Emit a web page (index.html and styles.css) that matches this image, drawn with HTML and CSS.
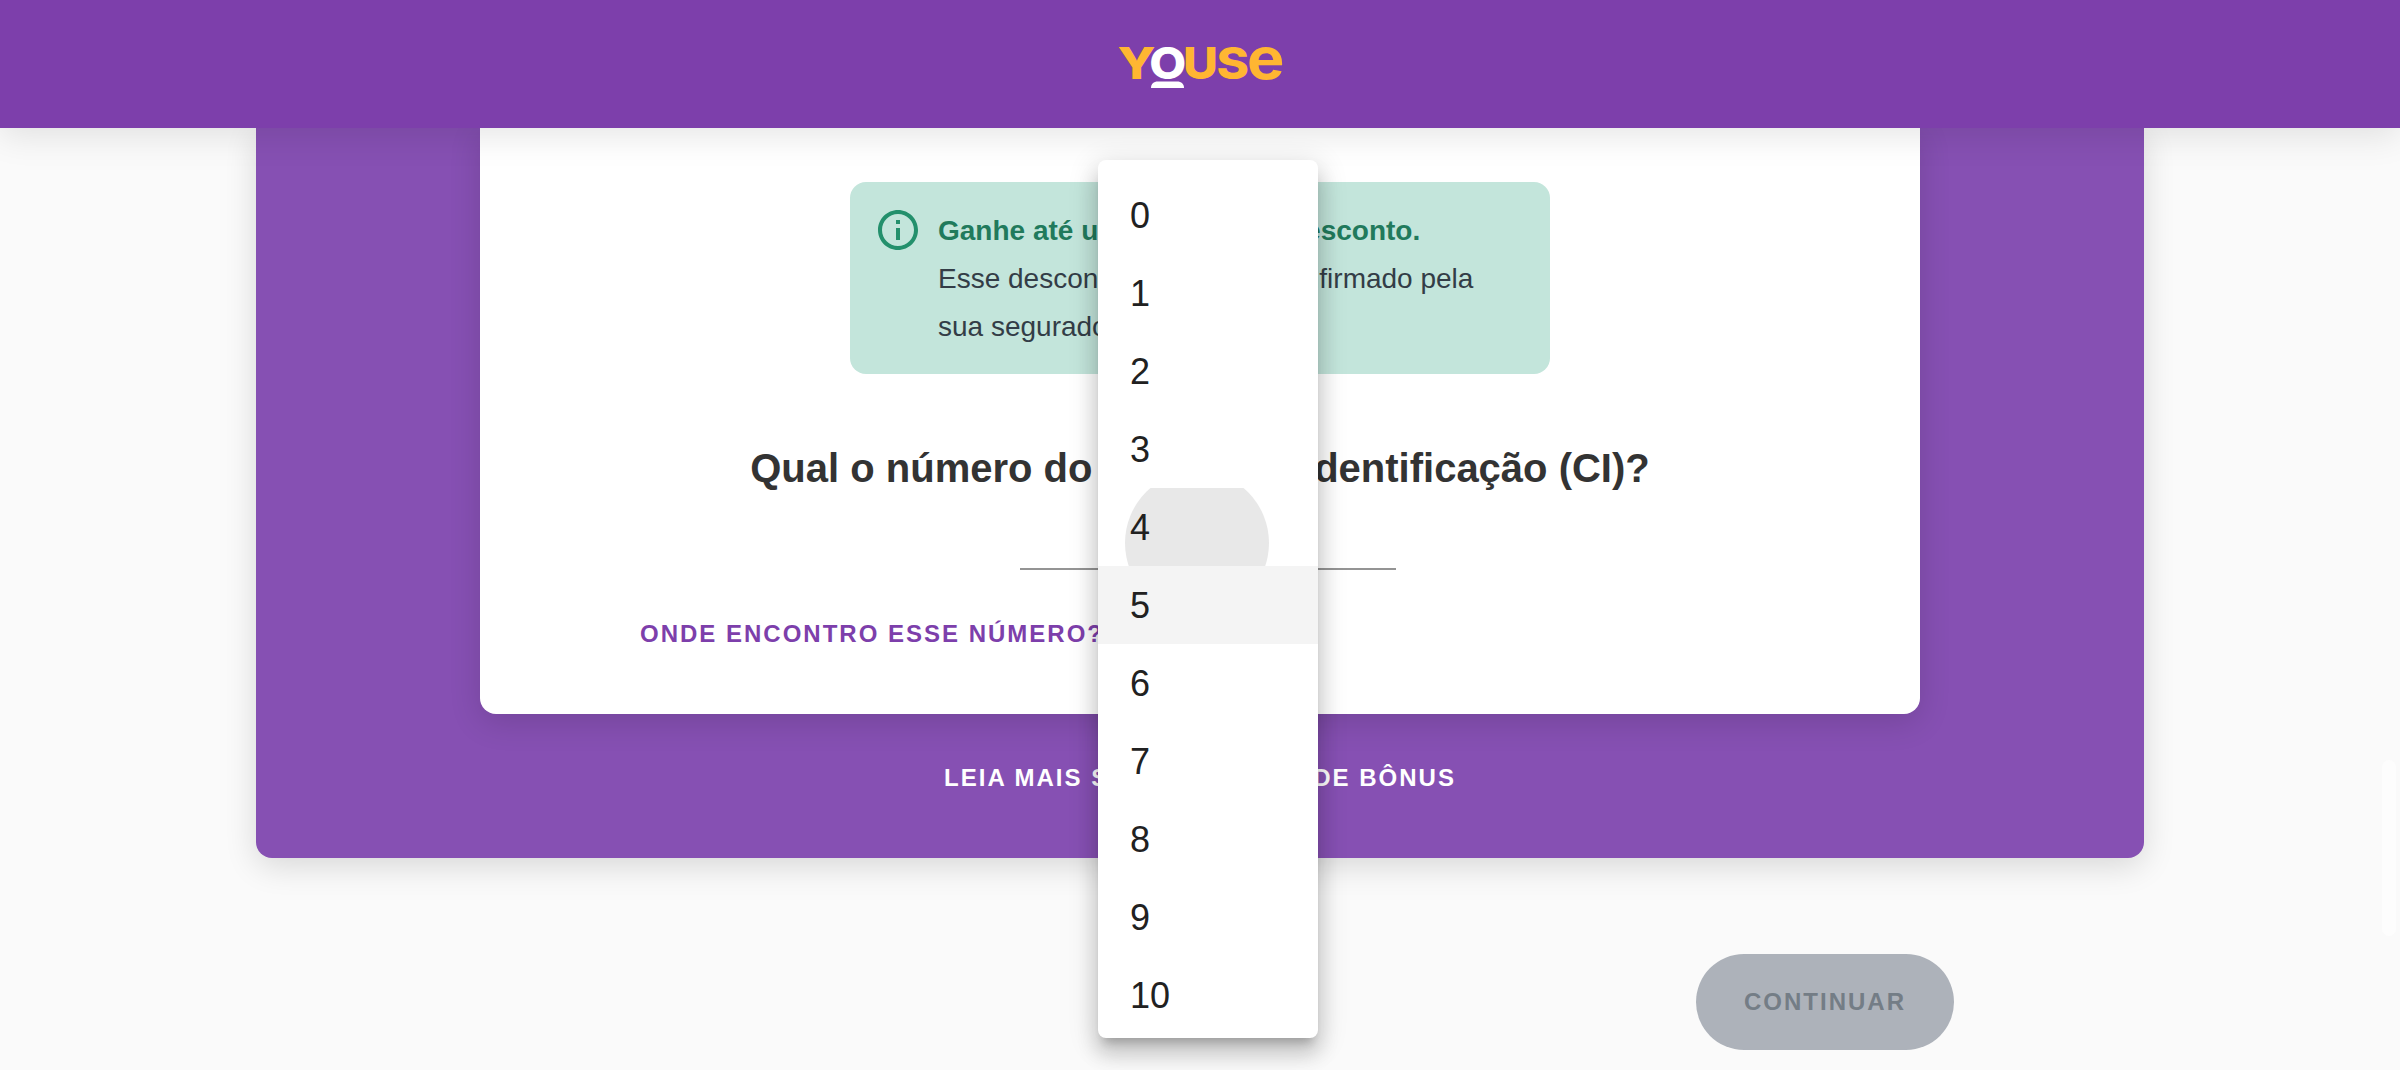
FILE: index.html
```html
<!DOCTYPE html>
<html lang="pt-BR">
<head>
<meta charset="utf-8">
<title>Youse</title>
<link rel="stylesheet" href="styles.css">
</head>
<body>
<header class="header">
  <svg class="logo" width="166" height="44" viewBox="0 0 166 44" role="img" aria-label="Youse">
    <g class="logo-type">
      <text x="0.5" y="33" textLength="38" lengthAdjust="spacingAndGlyphs">Y</text>
      <text class="logo-o" x="32.300" y="33" textLength="37" lengthAdjust="spacingAndGlyphs">O</text>
      <text x="66" y="33" textLength="35" lengthAdjust="spacingAndGlyphs">U</text>
      <text x="99.500" y="33" textLength="32.500" lengthAdjust="spacingAndGlyphs">S</text>
      <text class="logo-e" x="130" y="33" textLength="37.500" lengthAdjust="spacingAndGlyphs">e</text>
    </g>
    <path class="logo-base" d="M34 42c0-4 2.500-6.500 7-6.500h19c4.500 0 7 2.500 7 6.500z"/>
  </svg>
</header>

<main class="page">
  <section class="panel">
    <div class="card">
      <div class="alert">
        <svg class="alert-icon" width="48" height="48" viewBox="0 0 24 24">
          <path d="M11 7h2v2h-2zm0 4h2v6h-2zm1-9C6.480 2 2 6.480 2 12s4.480 10 10 10 10-4.480 10-10S17.520 2 12 2zm0 18c-4.410 0-8-3.590-8-8s3.590-8 8-8 8 3.590 8 8-3.590 8-8 8z"/>
        </svg>
        <div class="alert-text">
          <strong>Ganhe até um <span class="loose">máximo</span> de desconto.</strong>
          <p>Esse desconto precisa ser confirmado pela sua seguradora.</p>
        </div>
      </div>
      <h1 class="question">Qual o número do <span class="tight">Código de</span> Identificação (CI)?</h1>
      <div class="field"></div>
      <a class="help-link">ONDE ENCONTRO ESSE NÚMERO?</a>
    </div>
    <a class="more-link">LEIA MAIS SOBRE CLASSE DE BÔNUS</a>
  </section>
  <div class="actions">
    <button class="continue" disabled>CONTINUAR</button>
  </div>
</main>

<ul class="menu">
  <li>0</li>
  <li>1</li>
  <li>2</li>
  <li>3</li>
  <li class="pressed"><span>4</span></li>
  <li class="hover">5</li>
  <li>6</li>
  <li>7</li>
  <li>8</li>
  <li>9</li>
  <li>10</li>
</ul>
<div class="scroll-thumb"></div>
</body>
</html>
```
FILE: styles.css
```css
* {
  box-sizing: border-box;
}

body {
  margin: 0;
  height: 1070px;
  overflow: hidden;
  background: #fafafa;
  color: #333;
  font-family: "Liberation Sans", Arial, sans-serif;
}

.header {
  position: relative;
  z-index: 1;
  display: flex;
  justify-content: center;
  height: 128px;
  padding-top: 46px;
  background: #7d3fab;
  box-shadow: 0 8px 32px rgba(0, 0, 0, 0.1);
}

.logo {
  display: block;
  overflow: visible;
}

.logo-type {
  fill: #ffb632;
  font-family: Inter, sans-serif;
  font-size: 44px;
  font-weight: 800;
}

.logo-e {
  font-size: 57px;
  font-weight: 700;
}

.logo-o,
.logo-base {
  fill: #fff;
}

.panel {
  display: flex;
  flex-direction: column;
  align-items: center;
  width: 1888px;
  height: 730px;
  margin: 0 auto;
  background: #8650b3;
  border-radius: 0 0 16px 16px;
  box-shadow: 0 8px 32px rgba(0, 0, 0, 0.14);
}

.card {
  display: flex;
  flex-direction: column;
  align-items: center;
  width: 1440px;
  height: 586px;
  padding-top: 54px;
  background: #fff;
  border-radius: 0 0 16px 16px;
  box-shadow: 0 8px 32px rgba(0, 0, 0, 0.14);
}

.alert {
  display: flex;
  gap: 16px;
  width: 700px;
  height: 192px;
  padding: 24px;
  background: #c3e5db;
  border-radius: 16px;
  color: #333d47;
  font-size: 28px;
  line-height: 48px;
}

.alert-icon {
  flex: none;
  fill: #23906c;
}

.alert-text {
  padding-top: 1px;
}

.alert-text strong {
  display: block;
  color: #217a5c;
  white-space: nowrap;
}

.alert-text p {
  margin: 0;
}

.loose {
  letter-spacing: 0.5px;
}

.question {
  margin: 66px 0 72px;
  font-size: 40px;
  line-height: 56px;
  white-space: nowrap;
}

.tight {
  letter-spacing: -0.8px;
}

.field {
  width: 376px;
  height: 2px;
  margin-left: 16px;
  background: #949494;
}

.help-link,
.more-link,
.continue {
  font-size: 24px;
  font-weight: 700;
  line-height: 36px;
  letter-spacing: 2px;
}

.help-link {
  align-self: flex-start;
  margin: 46px 0 0 160px;
  color: #7d3fab;
}

.more-link {
  margin-top: 46px;
  color: #fff;
}

.actions {
  display: flex;
  justify-content: flex-end;
  margin-top: 96px;
  padding-right: 446px;
}

.continue {
  height: 96px;
  padding: 0 48px;
  border: 0;
  border-radius: 48px;
  background: #adb2ba;
  color: #747d86;
  font-family: inherit;
}

.menu {
  position: absolute;
  z-index: 2;
  top: 160px;
  left: 1098px;
  width: 220px;
  height: 878px;
  margin: 0;
  padding: 16px 0 0;
  overflow: hidden;
  background: #fff;
  border-radius: 8px;
  box-shadow: 0 10px 10px -6px rgba(0, 0, 0, 0.2), 0 16px 20px 2px rgba(0, 0, 0, 0.14), 0 6px 28px 4px rgba(0, 0, 0, 0.12);
  color: #212121;
  font-size: 36px;
  list-style: none;
}

.menu li {
  height: 78px;
  padding-left: 32px;
  line-height: 80px;
}

.menu .pressed {
  position: relative;
  overflow: hidden;
}

.pressed::before {
  content: "";
  position: absolute;
  top: -17px;
  left: 27px;
  width: 144px;
  height: 144px;
  border-radius: 50%;
  background: #e8e8e8;
}

.pressed span {
  position: relative;
}

.menu .hover {
  background: #f4f4f4;
}

.scroll-thumb {
  position: absolute;
  top: 760px;
  right: 4px;
  width: 14px;
  height: 176px;
  border-radius: 7px;
  background: #fdfdfd;
}
```
